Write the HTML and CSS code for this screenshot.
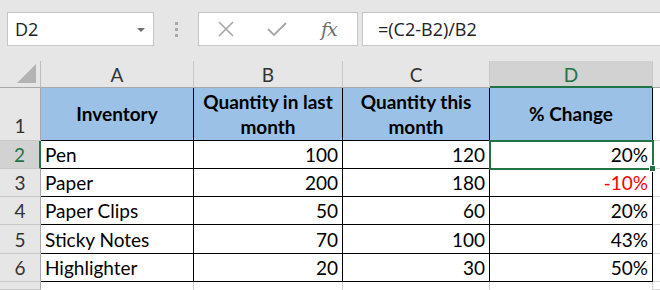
FILE: index.html
```html
<!DOCTYPE html>
<html lang="en">
<head>
    <meta charset="UTF-8">
    <meta name="viewport" content="width=device-width, initial-scale=1.0">
    <title>Inventory</title>
    <link rel="stylesheet" href="styles.css">
</head>
<body>
    <div class="toolbar">
        <div class="name-box">
            <span>D2</span>
            <span class="arrow"></span>
        </div>
        <div class="grip"><i></i><i></i><i></i></div>
        <div class="fx-buttons">
            <svg class="btn" width="20" height="20" viewBox="0 0 20 20"><path d="M3 3 L17 17 M17 3 L3 17" stroke="#a6a6a6" stroke-width="1.6" fill="none"/></svg>
            <svg class="btn" width="22" height="20" viewBox="0 0 22 20"><path d="M2 10 L8 16 L20 4" stroke="#a6a6a6" stroke-width="1.8" fill="none"/></svg>
            <span class="fx">fx</span>
        </div>
        <div class="formula">=(C2-B2)/B2</div>
    </div>

    <div class="sheet">
        <div class="corner"><span class="tri"></span></div>
        <div class="col-head">A</div>
        <div class="col-head">B</div>
        <div class="col-head">C</div>
        <div class="col-head selected">D</div>
        <div class="col-head"></div>

        <div class="row-head tall">1</div>
        <div class="cell th">Inventory</div>
        <div class="cell th">Quantity in last month</div>
        <div class="cell th">Quantity this month</div>
        <div class="cell th">% Change</div>
        <div class="cell blank"></div>

        <div class="row-head selected">2</div>
        <div class="cell">Pen</div>
        <div class="cell num">100</div>
        <div class="cell num">120</div>
        <div class="cell num active">20%</div>
        <div class="cell blank"></div>

        <div class="row-head">3</div>
        <div class="cell">Paper</div>
        <div class="cell num">200</div>
        <div class="cell num">180</div>
        <div class="cell num neg">-10%</div>
        <div class="cell blank"></div>

        <div class="row-head">4</div>
        <div class="cell">Paper Clips</div>
        <div class="cell num">50</div>
        <div class="cell num">60</div>
        <div class="cell num">20%</div>
        <div class="cell blank"></div>

        <div class="row-head">5</div>
        <div class="cell">Sticky Notes</div>
        <div class="cell num">70</div>
        <div class="cell num">100</div>
        <div class="cell num">43%</div>
        <div class="cell blank"></div>

        <div class="row-head">6</div>
        <div class="cell">Highlighter</div>
        <div class="cell num">20</div>
        <div class="cell num">30</div>
        <div class="cell num">50%</div>
        <div class="cell blank"></div>

        <div class="row-head"></div>
        <div class="cell empty"></div>
        <div class="cell empty"></div>
        <div class="cell empty"></div>
        <div class="cell empty"></div>
        <div class="cell blank"></div>
    </div>
</body>
</html>
```

FILE: styles.css
```css
body {
    margin: 0;
    background: #fff;
    color: #000;
    width: 660px;
    height: 290px;
    overflow: hidden;
    font-family: Lato, sans-serif;
}

.toolbar {
    background: #e6e6e6;
    height: 61px;
    display: flex;
    align-items: flex-start;
    padding-top: 12px;
    box-sizing: border-box;
}

.name-box {
    margin-left: 7px;
    width: 147px;
    height: 34px;
    box-sizing: border-box;
    background: #fff;
    border: 1px solid #c6c6c6;
    display: flex;
    align-items: center;
    justify-content: space-between;
    padding: 0 8px 0 7px;
    font-family: "Open Sans", sans-serif;
    font-size: 18px;
    color: #222;
}

.arrow {
    width: 0;
    height: 0;
    border-left: 4px solid transparent;
    border-right: 4px solid transparent;
    border-top: 4px solid #6e6e6e;
    margin-top: 2px;
}

.grip {
    width: 44px;
    height: 34px;
    display: flex;
    flex-direction: column;
    align-items: center;
    justify-content: center;
    gap: 3px;
}

.grip i {
    width: 3px;
    height: 3px;
    background: #a9a9a9;
}

.fx-buttons {
    width: 160px;
    height: 34px;
    box-sizing: border-box;
    background: #fff;
    border: 1px solid #c6c6c6;
    display: flex;
    align-items: center;
    padding-left: 17px;
    gap: 28px;
}

.fx-buttons .btn + .btn {
    margin-left: 2px;
}

.fx {
    font-family: "DejaVu Serif", "Liberation Serif", serif;
    font-style: italic;
    font-size: 19px;
    color: #6b6b6b;
    margin-left: 5px;
    letter-spacing: -1px;
}

.formula {
    margin-left: 4px;
    flex: 1;
    height: 34px;
    box-sizing: border-box;
    background: #fff;
    border: 1px solid #c6c6c6;
    border-right: none;
    padding-left: 15px;
    display: flex;
    align-items: center;
    font-family: "Open Sans", sans-serif;
    font-size: 18px;
    color: #222;
}

.sheet {
    display: grid;
    grid-template-columns: 41px 153px 149px 147px 163px 1fr;
    grid-template-rows: 27px 53px 28px 28px 28px 29px 28px 8px;
    font-size: 19px;
}

.corner,
.col-head,
.row-head {
    background: #e6e6e6;
    color: #333;
    box-sizing: border-box;
}

.corner {
    border-right: 1px solid #bdbdbd;
    border-bottom: 1px solid #a8a8a8;
    display: flex;
    justify-content: flex-end;
    align-items: flex-end;
    padding: 0 4px 4px 0;
}

.tri {
    width: 0;
    height: 0;
    border-left: 19px solid transparent;
    border-bottom: 19px solid #b3b3b3;
}

.col-head {
    border-right: 1px solid #c8c8c8;
    border-bottom: 1px solid #a8a8a8;
    display: flex;
    justify-content: center;
    align-items: center;
    padding-top: 1px;
}

.col-head.selected {
    background: #d2d2d2;
    color: #217346;
    border-bottom: 2px solid #217346;
}

.row-head {
    border-right: 1px solid #a8a8a8;
    border-bottom: 1px solid #c8c8c8;
    display: flex;
    justify-content: center;
    align-items: flex-end;
    padding-bottom: 2px;
}

.row-head.tall {
    padding-bottom: 3px;
}

.row-head.selected {
    background: #d2d2d2;
    color: #217346;
    border-right: 2px solid #217346;
}

.cell {
    box-sizing: border-box;
    border-right: 1px solid #000;
    border-bottom: 1px solid #000;
    display: flex;
    align-items: flex-end;
    padding: 0 4px 2px 4px;
    white-space: nowrap;
}

.cell.th {
    background: #9bc2e6;
    font-weight: bold;
    justify-content: center;
    align-items: center;
    text-align: center;
    white-space: normal;
    line-height: 25px;
    padding: 0 2px 1px;
}

.cell.num {
    justify-content: flex-end;
}

.cell.neg {
    color: #ff0000;
}

.cell.active {
    position: relative;
    outline: 2px solid #217346;
    outline-offset: -1px;
}

.cell.active::after {
    content: "";
    position: absolute;
    right: -4px;
    bottom: -4px;
    width: 5px;
    height: 5px;
    background: #217346;
    border: 1px solid #fff;
}

.cell.empty {
    border-right-color: #d4d4d4;
    border-bottom: none;
}

.cell.blank {
    border-right: none;
    border-bottom: 1px solid #d4d4d4;
}

.row-head:last-of-type {
    border-bottom: none;
}
```
